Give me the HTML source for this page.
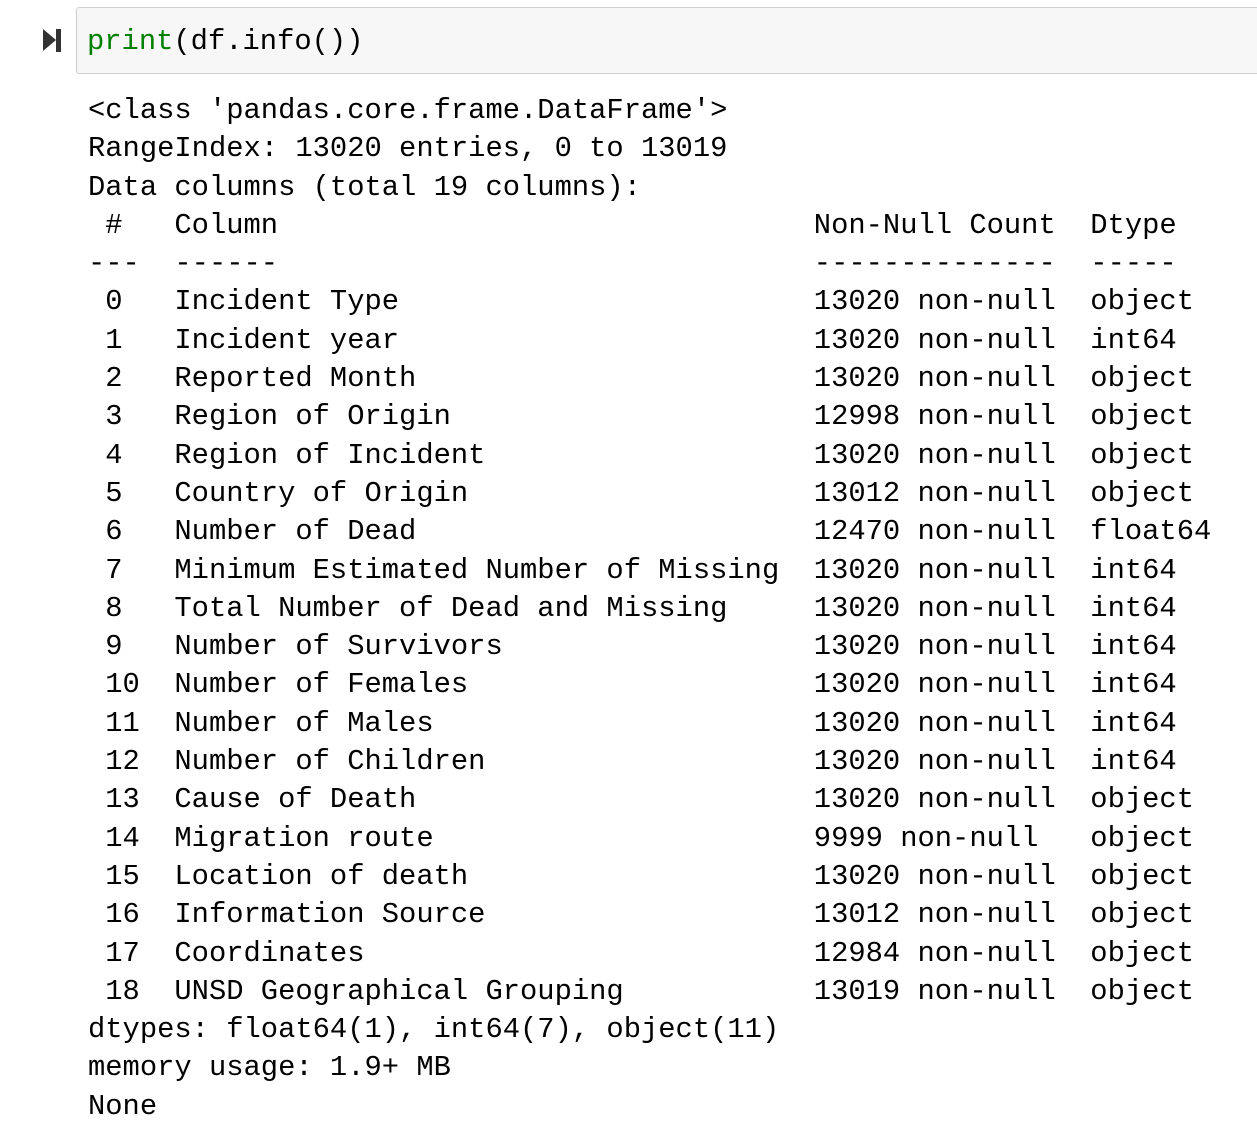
<!DOCTYPE html>
<html><head><style>
body{margin:0;background:#fff;width:1257px;height:1134px;overflow:hidden;position:relative;font-family:"Liberation Mono",monospace;}
.box{position:absolute;left:76px;top:7px;width:1200px;height:67px;background:#f7f7f7;border:1px solid #cfcfcf;border-radius:3px;box-sizing:border-box;}
.in{position:absolute;left:87px;top:23px;font-size:28.8px;line-height:38px;white-space:pre;color:#000;}
.g{color:#008000;}
pre{position:absolute;left:88px;top:92px;margin:0;font-family:"Liberation Mono",monospace;font-size:28.8px;line-height:38.3px;color:#000;}
</style></head><body>
<svg style="position:absolute;left:41px;top:28px" width="22" height="26"><polygon points="2,1 15,12 2,23" fill="#333"/><rect x="15" y="1" width="5" height="23" fill="#333"/></svg>
<div class="box"></div>
<div class="in"><span class="g">print</span>(df.info())</div>
<pre>&lt;class 'pandas.core.frame.DataFrame'&gt;
RangeIndex: 13020 entries, 0 to 13019
Data columns (total 19 columns):
 #   Column                               Non-Null Count  Dtype  
---  ------                               --------------  -----  
 0   Incident Type                        13020 non-null  object 
 1   Incident year                        13020 non-null  int64  
 2   Reported Month                       13020 non-null  object 
 3   Region of Origin                     12998 non-null  object 
 4   Region of Incident                   13020 non-null  object 
 5   Country of Origin                    13012 non-null  object 
 6   Number of Dead                       12470 non-null  float64
 7   Minimum Estimated Number of Missing  13020 non-null  int64  
 8   Total Number of Dead and Missing     13020 non-null  int64  
 9   Number of Survivors                  13020 non-null  int64  
 10  Number of Females                    13020 non-null  int64  
 11  Number of Males                      13020 non-null  int64  
 12  Number of Children                   13020 non-null  int64  
 13  Cause of Death                       13020 non-null  object 
 14  Migration route                      9999 non-null   object 
 15  Location of death                    13020 non-null  object 
 16  Information Source                   13012 non-null  object 
 17  Coordinates                          12984 non-null  object 
 18  UNSD Geographical Grouping           13019 non-null  object 
dtypes: float64(1), int64(7), object(11)
memory usage: 1.9+ MB
None</pre>
</body></html>
